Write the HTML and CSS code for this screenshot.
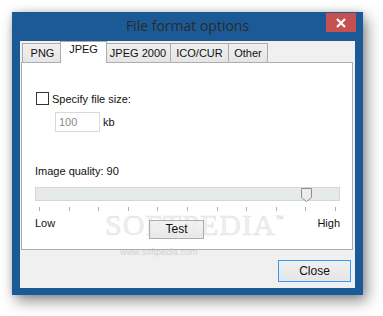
FILE: index.html
```html
<!DOCTYPE html>
<html>
<head>
<meta charset="utf-8">
<link rel="stylesheet" href="styles.css">
</head>
<body>
<div class="window">
  <div class="titlebar">
    <span></span>
    <span class="title">File format options</span>
    <span class="xbtn"><svg width="10" height="10" viewBox="0 0 10 10"><path d="M1 1 L9 9 M9 1 L1 9" stroke="#fff" stroke-width="2.2"/></svg></span>
  </div>
  <div class="client">
    <div class="tabs">
      <div class="tab t-png">PNG</div>
      <div class="tab active t-jpeg">JPEG</div>
      <div class="tab t-j2k">JPEG 2000</div>
      <div class="tab t-ico">ICO/CUR</div>
      <div class="tab t-other">Other</div>
    </div>
    <div class="panel">
      <label class="check-row"><span class="checkbox"></span><span>Specify file size:</span></label>
      <div class="size-row"><span class="input">100</span><span class="unit">kb</span></div>
      <div class="quality">Image quality: 90</div>
      <div class="track">
        <svg class="thumb" width="11" height="14" viewBox="0 0 11 14"><path d="M0.5 0.5 H10.5 V9.5 L5.5 13.5 L0.5 9.5 Z" fill="#ececec" stroke="#8f8f8f"/></svg>
      </div>
      <div class="ticks">
        <i></i><i></i><i></i><i></i><i></i><i></i><i></i><i></i><i></i><i></i><i></i>
      </div>
      <div class="range-row">
        <span class="low">Low</span>
        <span class="btn test">Test</span>
        <span class="high">High</span>
      </div>
      <div class="watermark">SOFTPEDIA<sup>™</sup></div>
      <div class="wm-url">www.softpedia.com</div>
    </div>
    <div class="footer">
      <span class="btn close">Close</span>
    </div>
  </div>
</div>
</body>
</html>
```

FILE: styles.css
```css
html, body {
  margin: 0;
  padding: 0;
  background: #ffffff;
}
body {
  width: 383px;
  height: 316px;
  overflow: hidden;
  font-family: "Liberation Sans", Arial, sans-serif;
  font-size: 11px;
  color: #111;
}
.window {
  margin: 12px 0 0 12px;
  width: 351px;
  height: 283px;
  box-sizing: border-box;
  background: #1b5a96;
  padding: 0 8px 7px 8px;
  display: flex;
  flex-direction: column;
  box-shadow: 4px 6px 14px rgba(0, 0, 0, 0.45), 0 0 6px rgba(0,0,0,0.15);
}
.titlebar {
  margin: 0 -8px;
  height: 29px;
  display: grid;
  grid-template-columns: 1fr auto 1fr;
  align-items: start;
}
.title {
  font-family: "Open Sans", "Noto Sans", sans-serif;
  font-size: 14px;
  color: #2a2a2a;
  line-height: 28px;
}
.xbtn {
  justify-self: end;
  margin: 1px 7px 0 0;
  width: 30px;
  height: 19px;
  background: #c75050;
  display: flex;
  align-items: center;
  justify-content: center;
}
.client {
  flex: 1;
  background: #f0f0f0;
  display: flex;
  flex-direction: column;
}
.tabs {
  display: flex;
  padding-left: 2px;
  height: 21px;
  align-items: flex-end;
  position: relative;
  z-index: 1;
}
.tab {
  box-sizing: border-box;
  height: 19px;
  border: 1px solid #acacac;
  border-bottom: none;
  background: linear-gradient(#f0f0f0, #e5e5e5);
  text-align: center;
  line-height: 18px;
  margin-right: -1px;
}
.t-png { width: 41px; }
.t-jpeg { width: 47px; margin-left: -2px; margin-right: -2px; }
.t-j2k { width: 66px; }
.t-ico { width: 59px; }
.t-other { width: 40px; }
.tab.active {
  height: 22px;
  background: #fff;
  line-height: 15px;
  position: relative;
  z-index: 2;
  margin-bottom: -1px;
}
.panel {
  position: relative;
  margin: 0 2px 0 1px;
  height: 188px;
  box-sizing: border-box;
  background: #fff;
  border: 1px solid #adadad;
  padding: 0 12px 0 13px;
  display: flex;
  flex-direction: column;
}
.check-row {
  margin-top: 29px;
  display: flex;
  align-items: center;
  height: 13px;
}
.checkbox {
  width: 13px;
  height: 13px;
  box-sizing: border-box;
  border: 1px solid #333;
  background: #fff;
  margin-right: 3px;
  margin-left: 1px;
}
.size-row {
  margin-top: 7px;
  margin-left: 20px;
  display: flex;
  align-items: center;
  height: 20px;
}
.input {
  width: 45px;
  height: 20px;
  box-sizing: border-box;
  border: 1px solid #d9d9d9;
  color: #8a8a8a;
  padding-left: 3px;
  line-height: 18px;
}
.unit {
  margin-left: 3px;
}
.quality {
  margin-top: 33px;
  line-height: 13px;
}
.track {
  margin-top: 9px;
  height: 14px;
  box-sizing: border-box;
  border: 1px solid #d6d6d6;
  background: #e7eaea;
  position: relative;
}
.thumb {
  position: absolute;
  left: 265px;
  top: 0px;
}
.ticks {
  margin-top: 6px;
  height: 4px;
  display: flex;
  justify-content: space-between;
  padding: 0 4px 0 4px;
}
.ticks i {
  width: 1px;
  height: 4px;
  background: #b0b0b0;
}
.range-row {
  margin-top: 6px;
  display: grid;
  grid-template-columns: 114px 55px 1fr;
  align-items: start;
}
.high {
  justify-self: end;
}
.btn {
  box-sizing: border-box;
  border: 1px solid #acacac;
  background: linear-gradient(#f0f0f0, #e5e5e5);
  text-align: center;
  display: block;
}
.test {
  margin-top: 3px;
  height: 19px;
  line-height: 17px;
  font-size: 12px;
  position: relative;
  z-index: 3;
  background: linear-gradient(rgba(240,240,240,0.85), rgba(229,229,229,0.85));
}
.watermark {
  position: absolute;
  left: 83px;
  top: 145px;
  font-family: "Liberation Serif", serif;
  font-size: 30px;
  letter-spacing: 1px;
  color: rgba(238, 238, 238, 0.9);
  -webkit-text-stroke: 0.5px rgba(205, 205, 205, 0.55);
  z-index: 2;
  pointer-events: none;
}
.watermark sup {
  font-size: 8px;
  vertical-align: 14px;
}
.wm-url {
  position: absolute;
  left: 98px;
  top: 184px;
  font-size: 9px;
  color: rgba(200, 200, 200, 0.8);
  z-index: 2;
}
.footer {
  flex: 1;
  display: flex;
  justify-content: flex-end;
  align-items: flex-start;
  padding: 10px 4px 0 0;
}
.close {
  width: 73px;
  height: 22px;
  border-color: #3399ff;
  line-height: 20px;
  font-size: 12px;
}
```
